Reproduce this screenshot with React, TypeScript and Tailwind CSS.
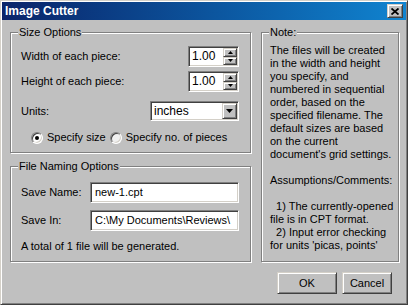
import React from "react"

const sunken =
  "border border-t-[#808080] border-l-[#808080] border-b-white border-r-white shadow-[inset_1px_1px_0_#404040,inset_-1px_-1px_0_#d4d0c8] bg-white"
const raised =
  "border border-t-[#d4d0c8] border-l-[#d4d0c8] border-b-[#404040] border-r-[#404040] shadow-[inset_1px_1px_0_#fff,inset_-1px_-1px_0_#808080] bg-[#c0c0c0]"

function Group({ title, className, children }: { title: string; className: string; children: React.ReactNode }) {
  return (
    <div className={`relative border border-[#808080] shadow-[1px_1px_0_#fff,inset_1px_1px_0_#fff] ${className}`}>
      <span className="absolute -top-[7px] left-[7px] bg-[#c0c0c0] px-[1px] leading-[13px]">{title}</span>
      {children}
    </div>
  )
}

function Arrow({ up }: { up?: boolean }) {
  return (
    <svg width="5" height="3" viewBox="0 0 5 3">
      <path d={up ? "M2.5 0 L5 3 L0 3 Z" : "M0 0 L5 0 L2.5 3 Z"} fill="#000" />
    </svg>
  )
}

function Spinner({ value }: { value: string }) {
  return (
    <div className={`flex w-[51px] h-[21px] ${sunken}`}>
      <div className="flex-1 pl-[3px] leading-[19px] text-[12px]">{value}</div>
      <div className="flex flex-col w-[15px] py-[1px] pr-[1px]">
        <div className={`flex-1 flex items-center justify-center ${raised}`}>
          <Arrow up />
        </div>
        <div className={`flex-1 flex items-center justify-center ${raised}`}>
          <Arrow />
        </div>
      </div>
    </div>
  )
}

function Radio({ checked, label }: { checked?: boolean; label: string }) {
  return (
    <div className="flex items-center gap-[4px]">
      <div
        className={`w-[12px] h-[12px] rounded-full flex items-center justify-center border border-t-[#808080] border-l-[#808080] border-b-white border-r-white shadow-[inset_1px_1px_0_#404040,inset_-1px_-1px_0_#d4d0c8] ${
          checked ? "bg-white" : "bg-[#f0f0f0]"
        }`}
      >
        {checked && <div className="w-[4px] h-[4px] rounded-full bg-black" />}
      </div>
      <span className="leading-[13px]">{label}</span>
    </div>
  )
}

const noteLines = [
  "The files will be created",
  "in the width and height",
  "you specify, and",
  "numbered in sequential",
  "order, based on the",
  "specified filename. The",
  "default sizes are based",
  "on the current",
  "document's grid settings.",
  "",
  "Assumptions/Comments:",
  "",
  "  1) The currently-opened",
  "file is in CPT format.",
  "  2) Input error checking",
  "for units 'picas, points'",
]

export default function App() {
  return (
    <div className="w-[408px] h-[305px] bg-[#c0c0c0] text-black text-[11px] font-['Liberation_Sans',Arial,sans-serif] border border-t-[#d4d0c8] border-l-[#d4d0c8] border-b-[#404040] border-r-[#404040] shadow-[inset_1px_1px_0_#fff,inset_-1px_-1px_0_#808080] p-[1px] flex flex-col">
      {/* Title bar */}
      <div className="h-[18px] flex items-center justify-between pl-[3px] pr-[3px] bg-gradient-to-r from-[#0a246a] to-[#1084d0]">
        <span className="text-white font-bold text-[12px] leading-[18px]">Image Cutter</span>
        <div className={`w-[16px] h-[14px] flex items-center justify-center ${raised}`}>
          <svg width="8" height="7" viewBox="0 0 8 7">
            <path d="M0.5 0.5 L7.5 6.5 M7.5 0.5 L0.5 6.5" stroke="#000" strokeWidth="1.8" />
          </svg>
        </div>
      </div>

      {/* Body */}
      <div className="flex gap-[10px] pl-[8px] pt-[12px]">
        <div className="flex flex-col w-[241px] gap-[13px]">
          <Group title="Size Options" className="h-[121px] pt-[13px] pl-[10px] pr-[11px]">
            <div className="flex items-center justify-between h-[21px]">
              <span>Width of each piece:</span>
              <Spinner value="1.00" />
            </div>
            <div className="flex items-center justify-between h-[21px] mt-[4px]">
              <span>Height of each piece:</span>
              <Spinner value="1.00" />
            </div>
            <div className="flex items-center justify-between h-[20px] mt-[9px]">
              <span>Units:</span>
              <div className={`flex w-[89px] h-[20px] ${sunken}`}>
                <div className="flex-1 pl-[3px] leading-[18px] text-[12px]">inches</div>
                <div className={`w-[15px] my-[1px] mr-[1px] flex items-center justify-center ${raised}`}>
                  <svg width="7" height="4" viewBox="0 0 7 4">
                    <path d="M0 0 L7 0 L3.5 4 Z" fill="#000" />
                  </svg>
                </div>
              </div>
            </div>
            <div className="flex items-center gap-[4px] mt-[10px] pl-[10px]">
              <Radio checked label="Specify size" />
              <Radio label="Specify no. of pieces" />
            </div>
          </Group>

          <Group title="File Naming Options" className="h-[96px] pt-[15px] pl-[10px] pr-[11px]">
            <div className="flex items-center h-[21px]">
              <span className="w-[69px]">Save Name:</span>
              <div className={`flex-1 h-[21px] pl-[4px] leading-[19px] ${sunken}`}>new-1.cpt</div>
            </div>
            <div className="flex items-center h-[21px] mt-[7px]">
              <span className="w-[69px]">Save In:</span>
              <div className={`flex-1 h-[21px] pl-[4px] leading-[19px] ${sunken}`}>C:\My Documents\Reviews\</div>
            </div>
            <div className="mt-[9px] leading-[13px]">A total of 1 file will be generated.</div>
          </Group>
        </div>

        <Group title="Note:" className="w-[138px] h-[230px] pt-[11px] pl-[8px]">
          {noteLines.map((l, i) => (
            <div key={i} className="h-[13px] leading-[13px] whitespace-pre">
              {l}
            </div>
          ))}
        </Group>
      </div>

      {/* Buttons */}
      <div className="flex justify-end gap-[5px] mt-[10px] pr-[14px]">
        <button className={`w-[60px] h-[22px] ${raised}`}>OK</button>
        <button className={`w-[50px] h-[22px] ${raised}`}>Cancel</button>
      </div>
    </div>
  )
}
